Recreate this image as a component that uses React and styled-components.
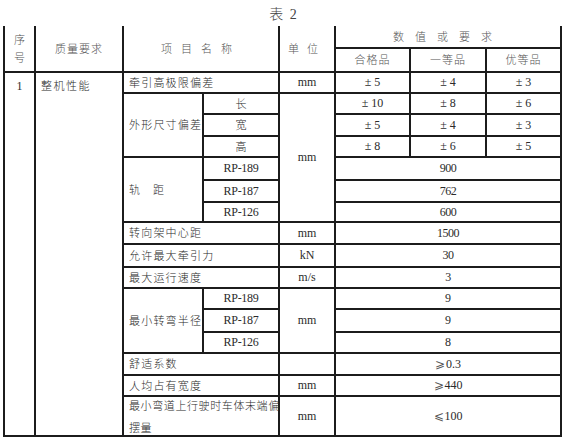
import React from "react";
import styled, {createGlobalStyle} from "styled-components";

const Global = createGlobalStyle`
  html, body {
    margin: 0;
    padding: 0;
    background: #fff;
  }
  body {
    width: 564px;
    height: 440px;
    overflow: hidden;
    font-family: "Liberation Serif", "Noto Sans CJK SC", serif;
    color: #2b2b2b;
  }
`;

const Page = styled.div`
  width: 564px;
  height: 440px;
  display: flex;
  flex-direction: column;
`;

const Title = styled.div`
  height: 26px;
  display: flex;
  align-items: center;
  justify-content: center;
  padding-left: 2px;
  font-family: "Liberation Serif", "Noto Sans CJK SC", serif;
  font-size: 14px;
  font-weight: 300;
  color: #444;
  word-spacing: 3px;
`;

const Grid = styled.div`
  margin-left: 3px;
  width: 559px;
  box-sizing: border-box;
  display: grid;
  grid-template-columns: 29px 86px 78px 74px 54px 73px 74px 73px;
  grid-template-rows: 21px 22px 19px 19px 20px 19px 21px 20px 18px 20px 21px 19px 19px 21px 19px 20px 19px 38px;
  gap: 2px;
  padding: 0 2px 2px 2px;
  background: #1c1c1c;
`;

const Cell = styled.div`
  grid-column: ${p => p.$col};
  grid-row: ${p => p.$row};
  background: #fff;
  display: flex;
  align-items: ${p => (p.$top ? "flex-start" : "center")};
  justify-content: ${p => (p.$left ? "flex-start" : "center")};
  padding: ${p => (p.$left ? "0 0 0 5px" : "0")};
  padding-top: ${p => (p.$top ? "6px" : "0")};
  font-family: ${p => (p.$cn ? '"Noto Sans CJK SC", sans-serif' : '"Liberation Serif", "Noto Sans CJK SC", serif')};
  font-size: ${p => (p.$cn ? "11px" : "12px")};
  font-weight: ${p => (p.$cn ? 300 : 400)};
  letter-spacing: ${p => p.$spacing || "0"};
  color: ${p => (p.$head ? "#555" : "#2b2b2b")};
  line-height: ${p => p.$lh || "1.2"};
  white-space: nowrap;
  text-align: center;
`;

const Stack = styled.span`
  display: flex;
  flex-direction: column;
  align-items: center;
  gap: 4px;
`;

const Wrap = styled.span`
  text-align: left;
  line-height: 22px;
`;

const Sign = styled.span`
  font-family: "DejaVu Sans", "Noto Sans CJK SC", sans-serif;
  font-size: 12px;
  font-weight: 300;
  color: #555;
  margin-right: 1px;
`;

const sizeRows = [
  ["长", "± 10", "± 8", "± 6"],
  ["宽", "± 5", "± 4", "± 3"],
  ["高", "± 8", "± 6", "± 5"],
];

const gaugeRows = [
  ["RP-189", "900"],
  ["RP-187", "762"],
  ["RP-126", "600"],
];

const turnRows = [
  ["RP-189", "9"],
  ["RP-187", "9"],
  ["RP-126", "8"],
];

const singleRows = [
  {row: 10, name: "转向架中心距", unit: "mm", value: "1500"},
  {row: 11, name: "允许最大牵引力", unit: "kN", value: "30"},
  {row: 12, name: "最大运行速度", unit: "m/s", value: "3"},
];

const tailRows = [
  {row: 16, name: "舒适系数", unit: "", sign: "⩾", value: "0.3"},
  {row: 17, name: "人均占有宽度", unit: "mm", sign: "⩾", value: "440"},
];

export default function App() {
  return (
    <Page>
      <Global/>
      <Title>表 2</Title>
      <Grid>
        <Cell $col="1" $row="1 / 3" $cn $head>
          <Stack><span>序</span><span>号</span></Stack>
        </Cell>
        <Cell $col="2" $row="1 / 3" $cn $head $spacing="1px">质量要求</Cell>
        <Cell $col="3 / 5" $row="1 / 3" $cn $head $spacing="9px">项目名称</Cell>
        <Cell $col="5" $row="1 / 3" $cn $head $spacing="8px">单位</Cell>
        <Cell $col="6 / 9" $row="1" $cn $head $spacing="11px">数值或要求</Cell>
        <Cell $col="6" $row="2" $cn $head $spacing="1px">合格品</Cell>
        <Cell $col="7" $row="2" $cn $head $spacing="1px">一等品</Cell>
        <Cell $col="8" $row="2" $cn $head $spacing="1px">优等品</Cell>

        <Cell $col="1" $row="3 / 19" $top>1</Cell>
        <Cell $col="2" $row="3 / 19" $cn $left $top $spacing="1.5px">整机性能</Cell>

        <Cell $col="3 / 5" $row="3" $cn $left $spacing="1.2px">牵引高极限偏差</Cell>
        <Cell $col="5" $row="3">mm</Cell>
        <Cell $col="6" $row="3">± 5</Cell>
        <Cell $col="7" $row="3">± 4</Cell>
        <Cell $col="8" $row="3">± 3</Cell>

        <Cell $col="3" $row="4 / 7" $cn $left $spacing="1.2px">外形尺寸偏差</Cell>
        <Cell $col="5" $row="4 / 10">mm</Cell>
        {sizeRows.map((r, i) => (
          <React.Fragment key={r[0]}>
            <Cell $col="4" $row={4 + i} $cn>{r[0]}</Cell>
            <Cell $col="6" $row={4 + i}>{r[1]}</Cell>
            <Cell $col="7" $row={4 + i}>{r[2]}</Cell>
            <Cell $col="8" $row={4 + i}>{r[3]}</Cell>
          </React.Fragment>
        ))}

        <Cell $col="3" $row="7 / 10" $cn $left $spacing="13px">轨距</Cell>
        {gaugeRows.map((r, i) => (
          <React.Fragment key={r[0]}>
            <Cell $col="4" $row={7 + i} $spacing="-0.3px">{r[0]}</Cell>
            <Cell $col="6 / 9" $row={7 + i} $spacing="-0.5px">{r[1]}</Cell>
          </React.Fragment>
        ))}

        {singleRows.map(r => (
          <React.Fragment key={r.row}>
            <Cell $col="3 / 5" $row={r.row} $cn $left $spacing="1.2px">{r.name}</Cell>
            <Cell $col="5" $row={r.row}>{r.unit}</Cell>
            <Cell $col="6 / 9" $row={r.row} $spacing="-0.5px">{r.value}</Cell>
          </React.Fragment>
        ))}

        <Cell $col="3" $row="13 / 16" $cn $left $spacing="1.2px">最小转弯半径</Cell>
        <Cell $col="5" $row="13 / 16">mm</Cell>
        {turnRows.map((r, i) => (
          <React.Fragment key={r[0]}>
            <Cell $col="4" $row={13 + i} $spacing="-0.3px">{r[0]}</Cell>
            <Cell $col="6 / 9" $row={13 + i}>{r[1]}</Cell>
          </React.Fragment>
        ))}

        {tailRows.map(r => (
          <React.Fragment key={r.row}>
            <Cell $col="3 / 5" $row={r.row} $cn $left $spacing="1.2px">{r.name}</Cell>
            <Cell $col="5" $row={r.row}>{r.unit}</Cell>
            <Cell $col="6 / 9" $row={r.row}><Sign>{r.sign}</Sign>{r.value}</Cell>
          </React.Fragment>
        ))}

        <Cell $col="3 / 5" $row="18" $cn $left $spacing="0.6px">
          <Wrap>最小弯道上行驶时车体末端偏<br/>摆量</Wrap>
        </Cell>
        <Cell $col="5" $row="18">mm</Cell>
        <Cell $col="6 / 9" $row="18"><Sign>⩽</Sign>100</Cell>
      </Grid>
    </Page>
  );
}
